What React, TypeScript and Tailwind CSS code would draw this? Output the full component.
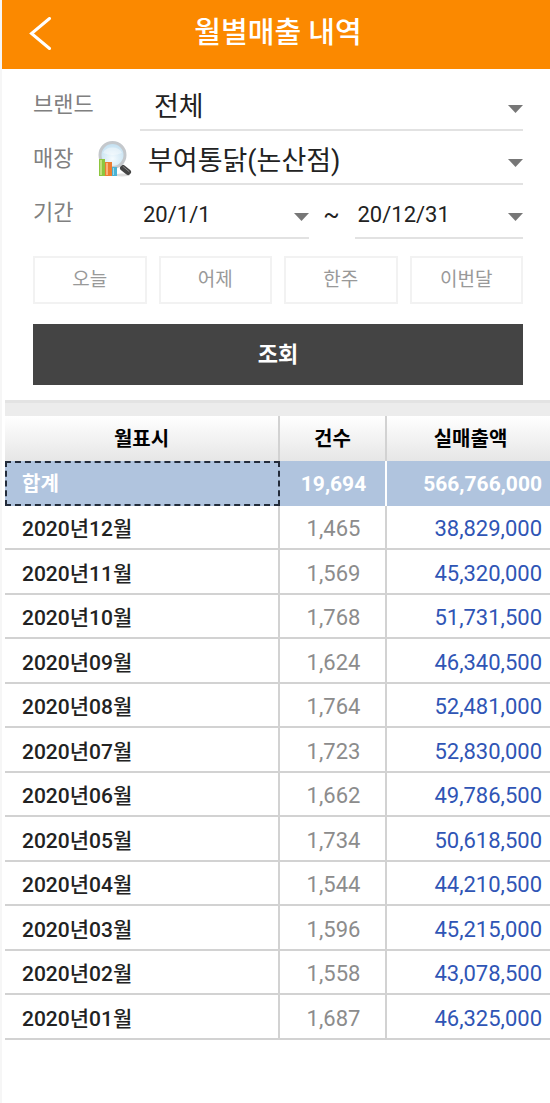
import { clsx } from 'clsx';
import { useState } from 'react';

type MonthlySales = {
  month: string;
  count: string;
  amount: string;
};

const MONTHLY_SALES: MonthlySales[] = [
  { month: '2020년12월', count: '1,465', amount: '38,829,000' },
  { month: '2020년11월', count: '1,569', amount: '45,320,000' },
  { month: '2020년10월', count: '1,768', amount: '51,731,500' },
  { month: '2020년09월', count: '1,624', amount: '46,340,500' },
  { month: '2020년08월', count: '1,764', amount: '52,481,000' },
  { month: '2020년07월', count: '1,723', amount: '52,830,000' },
  { month: '2020년06월', count: '1,662', amount: '49,786,500' },
  { month: '2020년05월', count: '1,734', amount: '50,618,500' },
  { month: '2020년04월', count: '1,544', amount: '44,210,500' },
  { month: '2020년03월', count: '1,596', amount: '45,215,000' },
  { month: '2020년02월', count: '1,558', amount: '43,078,500' },
  { month: '2020년01월', count: '1,687', amount: '46,325,000' },
];

const PERIODS = ['오늘', '어제', '한주', '이번달'];

function App() {
  return (
    <div className="min-h-screen border-l-2 border-[#f6f6f6] bg-white font-['Roboto','Noto_Sans_CJK_KR',sans-serif] text-[#222]">
      <PageHeader />
      <main>
        <SearchForm />
        <div className="ml-[3px] h-4 border-t-3 border-[#e3e3e3] bg-[#ececec]" />
        <SalesTable />
      </main>
    </div>
  );
}

function PageHeader() {
  return (
    <header className="grid h-[69px] grid-cols-[76px_1fr_72px] items-center bg-[#fb8900] text-white">
      <button type="button" aria-label="뒤로" className="flex h-full items-center pl-[26px]">
        <svg width="25" height="36" viewBox="0 0 25 36" fill="none">
          <path d="M21.5 1.5 3.500 16.500l18 15" stroke="#fff" strokeWidth="3" strokeLinecap="round" />
        </svg>
      </button>
      <h1 className="pb-1 text-center text-[29px] leading-10 font-medium">월별매출 내역</h1>
    </header>
  );
}

function SearchForm() {
  const [period, setPeriod] = useState('');

  return (
    <form className="pt-3.5 pr-[27px] pb-[15px] pl-[31px]" onSubmit={(e) => e.preventDefault()}>
      <div className="space-y-1.5">
        <div className="flex">
          <FieldLabel htmlFor="brand" text="브랜드" />
          <Dropdown id="brand" value="전체" className="pt-0.5 pl-3.5 text-[27px]" />
        </div>
        <div className="flex">
          <FieldLabel htmlFor="store" text="매장">
            <button type="button" aria-label="매장 검색" className="mr-2">
              <StoreSearchIcon />
            </button>
          </FieldLabel>
          <Dropdown id="store" value="부여통닭(논산점)" className="pt-0.5 pl-2 text-[27px]" />
        </div>
        <div className="flex">
          <FieldLabel htmlFor="from" text="기간" />
          <Dropdown id="from" value="20/1/1" className="pl-[3px] text-[22px]" />
          <span className="w-[46px] shrink-0 text-center text-[24px] leading-[48px]">~</span>
          <Dropdown id="to" label="종료일" value="20/12/31" className="pl-[3px] text-[22px]" />
        </div>
      </div>

      {/* 기간 빠른 선택 */}
      <div className="mt-[17px] grid grid-cols-4 gap-3">
        {PERIODS.map((p) => (
          <button
            key={p}
            type="button"
            aria-pressed={period === p}
            onClick={() => setPeriod(p)}
            className="h-12 border-2 border-[#f2f2f2] text-[19px] text-[#999]"
          >
            {p}
          </button>
        ))}
      </div>

      <button
        type="submit"
        className="mt-5 h-[61px] w-full bg-[#444] text-[22px] font-bold text-white"
      >
        조회
      </button>
    </form>
  );
}

type FieldLabelProps = {
  htmlFor: string;
  text: string;
  children?: React.ReactNode;
};

function FieldLabel({ htmlFor, text, children }: FieldLabelProps) {
  return (
    <div className="flex w-[107px] shrink-0 items-center justify-between pb-1">
      <label htmlFor={htmlFor} className="text-[22px] leading-8 text-[#808080]">
        {text}
      </label>
      {children}
    </div>
  );
}

type DropdownProps = {
  id: string;
  value: string;
  label?: string;
  className?: string;
};

function Dropdown({ id, value, label, className }: DropdownProps) {
  return (
    <div className="relative min-w-0 flex-1">
      <select
        id={id}
        aria-label={label}
        defaultValue={value}
        className={clsx('h-12 w-full appearance-none border-b-2 border-[#e2e2e2] pr-6', className)}
      >
        <option value={value}>{value}</option>
      </select>
      <svg
        width="15"
        height="8"
        viewBox="0 0 15 8"
        className="pointer-events-none absolute top-[22px] right-0"
      >
        <path d="M0 0h15L7.5 8z" fill="#777" />
      </svg>
    </div>
  );
}

function StoreSearchIcon() {
  return (
    <svg width="34" height="36" viewBox="0 0 34 36">
      <defs>
        <radialGradient id="lens" cx="50%" cy="65%" r="60%">
          <stop offset="0" stopColor="#f4fbfe" />
          <stop offset="1" stopColor="#c3e0f1" />
        </radialGradient>
      </defs>
      <ellipse cx="24" cy="34" rx="8" ry="1.5" fill="#ddd" />
      <path d="m21 23 4 4" stroke="#aaa" strokeWidth="3" />
      <path d="m25 27 5 4" stroke="#444" strokeWidth="6" strokeLinecap="round" />
      <path d="m25 25.5 6 5" stroke="#888" strokeWidth="1" strokeLinecap="round" />
      <circle cx="14.5" cy="14" r="12.5" fill="url(#lens)" stroke="#c4c8cc" strokeWidth="3" />
      <path d="M5 12a10 8 0 0 1 19 0q-9 4-19 0z" fill="#fff" opacity=".4" />
      <path d="M1 18h6v17H1z" fill="#8dc63f" />
      <path d="M2 19h2v15H2z" fill="#bfe07a" />
      <path d="M7 21h7v14H7z" fill="#ed7d31" />
      <path d="M8 22h2v12H8z" fill="#f9b27c" />
      <path d="M14 26h5v9h-5z" fill="#4bb3d3" />
      <path d="M15 27h1v7h-1z" fill="#9bdcee" />
    </svg>
  );
}

function SalesTable() {
  return (
    <div className="pl-[3px]">
      <table className="w-full table-fixed border-separate border-spacing-0 text-[22px] leading-7">
        <colgroup>
          <col />
          <col className="w-[107px]" />
          <col className="w-[163px]" />
        </colgroup>
        <thead>
          <tr className="h-[45px] bg-linear-to-b from-white to-[#e6e6e6] text-[20px] text-black">
            <th className="border-r-2 border-[#d2d2d2] p-0 font-bold">월표시</th>
            <th className="border-r-2 border-[#d2d2d2] p-0 font-bold">건수</th>
            <th className="p-0 pl-1 font-bold">실매출액</th>
          </tr>
        </thead>
        <tbody>
          {/* 합계 */}
          <tr className="h-[45px] bg-[#b0c4de] text-[21px] font-bold text-white">
            <td className="p-0 pl-[17px] text-[20px] outline-2 -outline-offset-2 outline-[#222b3a] outline-dashed">
              합계
            </td>
            <td className="border-r-2 border-white p-0 pl-0.5 text-center">19,694</td>
            <td className="p-0 pr-2 text-right">566,766,000</td>
          </tr>
          {MONTHLY_SALES.map((sales) => (
            <SalesRow key={sales.month} data={sales} />
          ))}
        </tbody>
      </table>
    </div>
  );
}

function SalesRow({ data }: { data: MonthlySales }) {
  const { month, count, amount } = data;

  return (
    <tr className="h-11 odd:h-[45px] *:border-b-2 *:border-[#d2d2d2]">
      <td className="border-r-2 p-0 pt-1 pl-[17px] text-[21px] font-medium">{month}</td>
      <td className="border-r-2 p-0 pt-1 pl-0.5 text-center text-[#8c8c8c]">{count}</td>
      <td className="p-0 pt-1 pr-2 text-right text-[#2f55b5]">{amount}</td>
    </tr>
  );
}

export default App;
